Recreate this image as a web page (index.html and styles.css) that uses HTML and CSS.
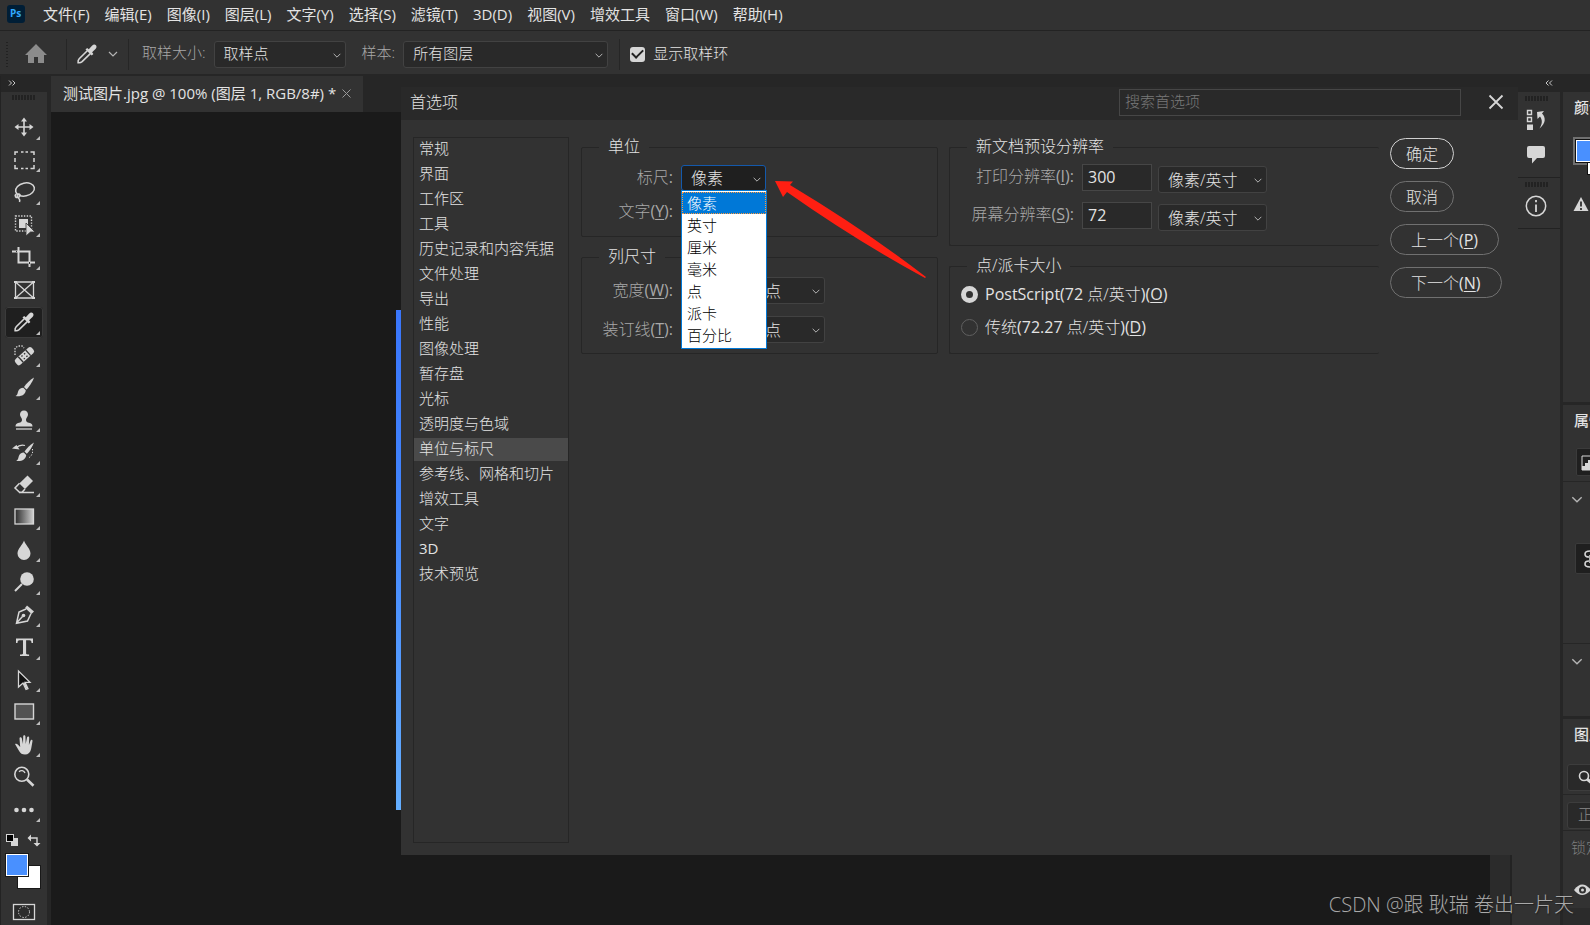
FILE: index.html
```html
<!DOCTYPE html>
<html lang="zh-CN">
<head>
<meta charset="utf-8">
<title>首选项</title>
<link rel="stylesheet" href="styles.css">
</head>
<body>
<svg class="defs" aria-hidden="true">
  <symbol id="chev" viewBox="0 0 10 6"><path d="M1 1l4 4 4-4" fill="none" stroke="#b4b4b4" stroke-width="1.2"/></symbol>
  <symbol id="dropper" viewBox="0 0 24 24"><path d="M12.300 8.700L4.200 16.800c-.9.900-1.300 2.300-1.100 3.900 1.700.3 3-.2 4-1.100l8.200-8" fill="none" stroke="#d6d6d6" stroke-width="1.600"/><path d="M10.500 7.500l1.600-1.600 1.700 1.300 3.200-3.500c1.300-1.400 3-1.400 3.900-.5s.9 2.500-.4 3.800l-3.400 3.200 1.300 1.700-1.700 1.700z" fill="#d6d6d6"/></symbol>
</svg>
<div class="app">
  <nav class="menubar" aria-label="主菜单">
    <svg class="logo" viewBox="0 0 18 18"><rect width="18" height="18" rx="3" fill="#001e36"/><text x="3" y="12" class="logo-text">Ps</text></svg>
    <button>文件(F)</button><button>编辑(E)</button><button>图像(I)</button><button>图层(L)</button><button>文字(Y)</button><button>选择(S)</button><button>滤镜(T)</button><button>3D(D)</button><button>视图(V)</button><button>增效工具</button><button>窗口(W)</button><button>帮助(H)</button>
  </nav>

  <div class="options">
    <span class="grip-v"></span>
    <button class="home" aria-label="主页"><svg width="22" height="20" viewBox="0 0 22 20"><path d="M11 0L0 11h3v8h6v-6h4v6h6v-8h3z" fill="#8c8c8c"/></svg></button>
    <span class="vline"></span>
    <button class="current-tool" aria-label="吸管工具"><svg width="24" height="24"><use href="#dropper"/></svg><svg width="10" height="6"><use href="#chev"/></svg></button>
    <span class="vline"></span>
    <label class="dim sample-size" for="ss">取样大小:</label>
    <span class="select w-size"><select id="ss"><option>取样点</option></select><svg><use href="#chev"/></svg></span>
    <label class="dim sample" for="sl">样本:</label>
    <span class="select w-layer"><select id="sl"><option>所有图层</option></select><svg><use href="#chev"/></svg></span>
    <span class="vline"></span>
    <label class="ring"><input type="checkbox" checked><span>显示取样环</span></label>
  </div>

  <div class="workspace">
    <aside class="toolbar">
      <div class="collapse"><svg width="8" height="6" viewBox="0 0 8 6"><path d="M1 .5L3.500 3 1 5.500M4.500 .5L7 3 4.500 5.500" fill="none" stroke="#c8c8c8"/></svg></div>
      <div class="grip-row"><span class="grip"></span></div>
      <div class="tools">
        <button aria-label="移动"><svg viewBox="0 0 24 24"><path d="M12 4v16M4 12h16" stroke="#d6d6d6" stroke-width="1.600"/><path d="M12 2.500l3 4H9zM12 21.500l3-4H9zM2.500 12l4-3v6zM21.500 12l-4-3v6z" fill="#d6d6d6"/></svg></button>
        <button aria-label="矩形选框"><svg viewBox="0 0 24 24"><path d="M3 7V4h3M9 4h2.500M13.500 4H16M18.500 4H22v3M22 10v4M22 17v3.500h-3.500M16 20.500h-2.500M11.500 20.500H9M6 20.500H3V17M3 14v-4" fill="none" stroke="#d6d6d6" stroke-width="1.500"/></svg></button>
        <button aria-label="套索"><svg viewBox="0 0 24 24"><g fill="none" stroke="#d6d6d6" stroke-width="1.500"><ellipse cx="13" cy="9.500" rx="9.500" ry="6.500" transform="rotate(-12 13 9.500)"/><path d="M4 14c-2 2 0 4 2 3.500s3-3 1-3.500-2.500 2-1 3.500 2.500 2 1.500 4.500"/></g></svg></button>
        <button aria-label="对象选择"><svg viewBox="0 0 24 24"><rect x="3.500" y="3" width="16" height="15" fill="none" stroke="#d6d6d6" stroke-width="1.400" stroke-dasharray="1.400 1.400"/><path d="M7 6h9v9H7z" fill="#d6d6d6"/><path d="M14 10l9 9h-4.500L14 23z" fill="#d6d6d6" stroke="#323232" stroke-width=".8"/></svg></button>
        <button aria-label="裁剪"><svg viewBox="0 0 24 24"><path d="M0 6.500h17.500V22M6.500 2v15.500H23" fill="none" stroke="#d6d6d6" stroke-width="2"/><path d="M4 6.500h1M17.500 19v-2" stroke="#323232"/></svg></button>
        <button class="plain" aria-label="图框"><svg viewBox="0 0 24 24"><path d="M3.500 4h18v16h-18zM3.500 4l18 16M21.500 4l-18 16" fill="none" stroke="#d6d6d6" stroke-width="1.300"/><path d="M2 3h3v2H2zM20 3h3v2h-3zM2 19h3v2H2zM20 19h3v2h-3z" fill="#d6d6d6"/></svg></button>
        <button class="active" aria-label="吸管"><svg><use href="#dropper"/></svg></button>
        <button aria-label="修复画笔"><svg viewBox="0 0 24 24"><path d="M3 12V5l3-2h4l2 2" fill="none" stroke="#d6d6d6" stroke-width="1.300" stroke-dasharray="1.400 1.400"/><g transform="rotate(-42 13 13)"><rect x="1.500" y="9" width="22" height="7.500" rx="2.500" fill="#d6d6d6"/><path d="M7.500 9v7.500M17.500 9v7.500M10 11h1.500M13.500 11H15M10 14.500h1.500M13.500 14.500H15" stroke="#323232" stroke-width="1.300"/></g></svg></button>
        <button aria-label="画笔"><svg viewBox="0 0 24 24"><path d="M22 2.500c-4 2.500-8 6.500-10 9.500l2.500 2.500C17 12 20.500 7 22 2.500z" fill="#d6d6d6"/><path d="M11.300 12.700l2.500 2.500c-.2 4.500-5 6.800-10.300 5.800 2-.8 2-2.400 2.500-4.300.7-2.600 3-4 5.300-4z" fill="#d6d6d6"/></svg></button>
        <button aria-label="仿制图章"><svg viewBox="0 0 24 24"><path d="M12 2.500a4.200 4.200 0 0 1 4 4.200c0 2-2 3-2 5 0 2 1 2.600 3 3 2.500.4 3.500 1.500 3.500 3.800h-17c0-2.300 1-3.400 3.500-3.800 2-.4 3-1 3-3 0-2-2-3-2-5a4.200 4.200 0 0 1 4-4.200z" fill="#d6d6d6"/><path d="M4 21h16" stroke="#d6d6d6" stroke-width="1.300"/></svg></button>
        <button aria-label="历史记录画笔"><svg viewBox="0 0 24 24"><path d="M22 2.500c-4 2.500-7.500 6-9.500 9l2.300 2.300C17 11.500 20.500 7 22 2.500z" fill="#d6d6d6"/><path d="M11.800 12.500l2.400 2.400c-.2 4.400-4.900 6.800-10 5.900 2-.8 2-2.400 2.500-4.300.7-2.600 2.800-4 5.100-4z" fill="#d6d6d6"/><path d="M4 8c3-3 6-3.500 9-2.500" fill="none" stroke="#d6d6d6" stroke-width="1.300"/><path d="M0 8.500L4.500 5l3 4.500z" fill="#d6d6d6"/><path d="M20.500 9v4l-1.500 3-3 2.500" fill="none" stroke="#d6d6d6" stroke-dasharray="1.300 1.500"/></svg></button>
        <button aria-label="橡皮擦"><svg viewBox="0 0 24 24"><path d="M15.500 2.500l5.500 5.500-8 8-5.700-5.500z" fill="#d6d6d6"/><path d="M7.500 10.300L3 15l4.500 4.300H10l3-3.300M7 19.500h15" fill="none" stroke="#d6d6d6" stroke-width="1.500"/></svg></button>
        <button aria-label="渐变"><svg viewBox="0 0 24 24"><linearGradient id="gr"><stop stop-color="#2a2a2a"/><stop offset="1" stop-color="#cfcfcf"/></linearGradient><rect x="3" y="4" width="18.500" height="15" fill="url(#gr)" stroke="#d6d6d6" stroke-width="1.300"/></svg></button>
        <button aria-label="模糊"><svg viewBox="0 0 24 24"><path d="M12 2.500c1 4 6.500 8 6.500 13a6.500 6.500 0 0 1-13 0c0-5 5.500-9 6.500-13z" fill="#d6d6d6"/></svg></button>
        <button aria-label="减淡"><svg viewBox="0 0 24 24"><circle cx="15" cy="9" r="6.800" fill="#d6d6d6"/><path d="M10 14l-7 7" stroke="#d6d6d6" stroke-width="2"/></svg></button>
        <button aria-label="钢笔"><svg viewBox="0 0 24 24"><path d="M15 2.500L22 8.500l-2.500 2.500L13 5z" fill="#d6d6d6"/><path d="M14 6L7 9 4.500 20.200 15.500 18 19 10.500M4.500 20l6-6.500" fill="none" stroke="#d6d6d6" stroke-width="1.500"/><circle cx="11.500" cy="12.500" r="1.800" fill="#d6d6d6"/></svg></button>
        <button aria-label="横排文字"><svg viewBox="0 0 24 24"><path d="M4 3.500h17V8h-1.500c0-2-.5-2.800-2-2.800h-3.400v13c0 1 .8 1.300 3 1.300V21H8v-1.500c2.200 0 3-.3 3-1.300v-13H7.500C6 5.200 5.500 6 5.500 8H4z" fill="#d6d6d6"/></svg></button>
        <button aria-label="路径选择"><svg viewBox="0 0 24 24"><path d="M6.500 3v16l4.500-4 3 6.500 2-.9-3-6.200h5z" fill="#111" stroke="#d6d6d6" stroke-width="1.300"/><path d="M11.500 15.500l2.500 5.500 1.600-.7-2.600-5.500z" fill="#d6d6d6"/></svg></button>
        <button aria-label="矩形"><svg viewBox="0 0 24 24"><rect x="3" y="4" width="18.500" height="15" fill="#535353" stroke="#d6d6d6" stroke-width="1.400"/></svg></button>
        <button aria-label="抓手"><svg viewBox="0 0 24 24"><path d="M3 11c1-.7 2.200-.2 3 .8L8.200 14 7.500 5.500c0-1.600 2-1.700 2.300-.2L11 11l.2-7.700c0-1.500 2.100-1.500 2.200 0L13.700 11l1.400-6.700c.3-1.400 2.200-1.100 2.100.4L16.900 12l1.700-4.600c.5-1.200 2.100-.8 1.900.6-.5 3-.8 5.300-1.300 7.500-.8 4-3 6-6.200 6-2.800 0-4.600-1-5.900-3.500z" fill="#d6d6d6"/></svg></button>
        <button class="plain" aria-label="缩放"><svg viewBox="0 0 24 24"><circle cx="9.800" cy="9.300" r="7" fill="none" stroke="#d6d6d6" stroke-width="1.600"/><path d="M7 6.700c2-1.800 5-1.200 6 1.300" fill="none" stroke="#d6d6d6" stroke-width="1.300"/><path d="M15 14.500l6.500 6.200" stroke="#d6d6d6" stroke-width="2.600"/></svg></button>
        <button aria-label="编辑工具栏"><svg viewBox="0 0 24 24"><g fill="#d6d6d6"><circle cx="4.500" cy="12" r="2.300"/><circle cx="12" cy="12" r="2.300"/><circle cx="19.500" cy="12" r="2.300"/></g></svg></button>
      </div>
      <div class="swatches">
        <svg width="40" height="98" viewBox="0 0 40 98">
          <path d="M6 11h7v8H6z" fill="#d6d6d6"/><rect x="1.500" y="7.500" width="7" height="7" fill="#000" stroke="#d6d6d6"/>
          <path d="M25 11h7v6" fill="none" stroke="#d6d6d6" stroke-width="1.400"/><path d="M26 7.500v7L22.500 11zM28.500 16h7L32 19.500z" fill="#d6d6d6"/>
          <rect x="12.500" y="38.500" width="23" height="23" fill="#fff" stroke="#191919"/>
          <rect x=".5" y="26.500" width="23" height="23" fill="#4990ff" stroke="#191919"/><rect x="1.500" y="27.500" width="21" height="21" fill="none" stroke="#fff"/>
          <rect x="8.500" y="77.500" width="21" height="15" fill="#2b2b2b" stroke="#d6d6d6" stroke-width="1.300"/><circle cx="19" cy="85" r="5.500" fill="none" stroke="#d6d6d6" stroke-dasharray="1.400 1.500"/>
        </svg>
      </div>
    </aside>

    <main class="document">
      <div class="tabs"><div class="tab">测试图片.jpg @ 100% (图层 1, RGB/8#) *<button aria-label="关闭"><svg width="9" height="9" viewBox="0 0 9 9"><path d="M.5 .5l8 8M8.500 .5l-8 8" stroke="#999"/></svg></button></div></div>
      <div class="canvas"><div class="picture"></div><div class="scroll"></div></div>
    </main>

    <aside class="side">
      <div class="side-head"><svg width="8" height="6" viewBox="0 0 8 6"><path d="M3.500 .5L1 3l2.500 2.500M7 .5L4.500 3 7 5.500" fill="none" stroke="#c8c8c8"/></svg></div>
      <div class="side-body">
        <div class="dock">
          <div class="dock-group">
            <span class="grip"></span>
            <button aria-label="历史记录"><svg width="22" height="22" viewBox="0 0 22 22"><path d="M2.500 1.500h4v4h-4zM2.500 8.500h4v4h-4z" fill="none" stroke="#d6d6d6" stroke-width="1.400"/><path d="M2 15.500h6V21H2z" fill="#d6d6d6"/><path d="M12 3l7-1-2 2.500c4 4 4 10-2.500 15 3-5 3-8.500.5-12L12.500 10z" fill="#d6d6d6"/></svg></button>
            <button aria-label="注释"><svg width="22" height="22" viewBox="0 0 22 22"><path d="M4 2h14q2 0 2 2v8q0 2-2 2h-6l-5 5.500V14H4q-2 0-2-2V4q0-2 2-2z" fill="#d6d6d6"/></svg></button>
          </div>
          <div class="dock-group">
            <span class="grip"></span>
            <button aria-label="信息"><svg width="22" height="22" viewBox="0 0 22 22"><circle cx="11" cy="11" r="9.700" fill="none" stroke="#d6d6d6" stroke-width="1.500"/><path d="M11 9.500V17M11 5v2.200" stroke="#d6d6d6" stroke-width="1.800"/></svg></button>
          </div>
        </div>
        <div class="panels">
          <section class="panel p-color">
            <h2>颜色</h2>
            <svg class="color-chip" width="30" height="40" viewBox="0 0 30 40"><path d="M0 0h30v28H0z" fill="#707070"/><path d="M14 25h16v13H14z" fill="#111"/><path d="M15 26h15v11H15z" fill="#fff"/><path d="M2 2h28v24H2z" fill="#111"/><path d="M3 3h27v22H3z" fill="#fff"/><path d="M4 4h26v20H4z" fill="#4990ff"/></svg>
            <svg class="warn" width="16" height="16" viewBox="0 0 16 16"><path d="M8 1l7.500 14H.5z" fill="#d6d6d6"/><path d="M8 5.500v5M8 12v2" stroke="#323232" stroke-width="1.800"/></svg>
          </section>
          <section class="panel p-props">
            <h2>属性</h2>
            <div class="chip"><svg width="16" height="16" viewBox="0 0 16 16"><path d="M1 1h15v14H1z" fill="#1f1f1f" stroke="#d6d6d6"/><path d="M1 15v-4h3V8h3V5h3V3h6v12z" fill="#d6d6d6"/></svg></div>
            <div class="fold first"><svg width="12" height="7"><use href="#chev"/></svg></div>
            <div class="chip link"><svg width="16" height="20" viewBox="0 0 16 20"><path d="M5 8Q1 8 1 5t5-3 5 3-2 3M5 12q-4 0-4 3t5 3 5-3-2-3M6 6v8" fill="none" stroke="#d6d6d6" stroke-width="1.600"/></svg></div>
            <div class="fold second"><svg width="12" height="7"><use href="#chev"/></svg></div>
          </section>
          <section class="panel p-layers">
            <h2>图层</h2>
            <div class="field"><svg width="16" height="16" viewBox="0 0 16 16"><circle cx="6" cy="6" r="4.500" fill="none" stroke="#d6d6d6" stroke-width="1.600"/><path d="M9 9l6 5" stroke="#d6d6d6" stroke-width="3"/></svg></div>
            <div class="row"><div class="field">正常</div></div>
            <div class="lock">锁定:</div>
            <svg class="eye" width="18" height="12" viewBox="0 0 18 12"><path d="M0 6q8-11 17 0-9 10-17 0z" fill="#d6d6d6"/><circle cx="8.500" cy="6" r="3.500" fill="#323232"/><circle cx="8.500" cy="6" r="1.500" fill="#d6d6d6"/></svg>
            <div class="panel-foot"></div>
          </section>
        </div>
      </div>
    </aside>
  </div>

  <div class="dialog" role="dialog" aria-labelledby="dlg-title">
    <header class="dlg-head">
      <h1 id="dlg-title">首选项</h1>
      <input type="text" class="search" placeholder="搜索首选项" aria-label="搜索首选项">
      <button class="close" aria-label="关闭"><svg width="16" height="16" viewBox="0 0 16 16"><path d="M1.500 1.500l13 13M14.500 1.500l-13 13" stroke="#d6d6d6" stroke-width="1.800"/></svg></button>
    </header>
    <div class="dlg-body">
      <nav class="cats" aria-label="类别">
        <button>常规</button><button>界面</button><button>工作区</button><button>工具</button><button>历史记录和内容凭据</button><button>文件处理</button><button>导出</button><button>性能</button><button>图像处理</button><button>暂存盘</button><button>光标</button><button>透明度与色域</button><button class="on">单位与标尺</button><button>参考线、网格和切片</button><button>增效工具</button><button>文字</button><button class="key">3D</button><button>技术预览</button>
      </nav>
      <div class="col col-a">
        <fieldset class="units">
          <legend>单位</legend>
          <div class="line"><label class="dim" for="ruler">标尺<span class="key">:</span></label>
            <span class="select focus"><select id="ruler"><option>像素</option></select><svg><use href="#chev"/></svg>
              <ul class="popup" role="listbox" aria-label="标尺"><li class="hot" role="option" aria-selected="true">像素</li><li role="option">英寸</li><li role="option">厘米</li><li role="option">毫米</li><li role="option">点</li><li role="option">派卡</li><li role="option">百分比</li></ul>
            </span></div>
          <div class="line"><label class="dim" for="type">文字<span class="key">(<u>Y</u>):</span></label><span class="select w-type"><select id="type"><option>点</option></select></span></div>
        </fieldset>
        <fieldset class="columns">
          <legend>列尺寸</legend>
          <div class="line"><label class="dim" for="cw">宽度<span class="key">(<u>W</u>):</span></label><input id="cw" type="text" value="180"><span class="select w-pt"><select aria-label="宽度单位"><option>点</option></select><svg><use href="#chev"/></svg></span></div>
          <div class="line"><label class="dim" for="gut">装订线<span class="key">(<u>T</u>):</span></label><input id="gut" type="text" value="12"><span class="select w-pt"><select aria-label="装订线单位"><option>点</option></select><svg><use href="#chev"/></svg></span></div>
        </fieldset>
      </div>
      <div class="col col-b">
        <fieldset class="res">
          <legend>新文档预设分辨率</legend>
          <div class="line"><label class="dim" for="pr">打印分辨率<span class="key">(<u>I</u>):</span></label><input id="pr" type="text" value="300"><span class="select w-res"><select aria-label="打印分辨率单位"><option>像素/英寸</option></select><svg><use href="#chev"/></svg></span></div>
          <div class="line"><label class="dim" for="sr">屏幕分辨率<span class="key">(<u>S</u>):</span></label><input id="sr" type="text" value="72"><span class="select w-res"><select aria-label="屏幕分辨率单位"><option>像素/英寸</option></select><svg><use href="#chev"/></svg></span></div>
        </fieldset>
        <fieldset class="pica">
          <legend>点/派卡大小</legend>
          <label class="radio"><input type="radio" name="pica" checked><span><span class="key">PostScript(72</span> 点/英寸<span class="key">)(<u>O</u>)</span></span></label>
          <label class="radio"><input type="radio" name="pica"><span>传统<span class="key">(72.27</span> 点/英寸<span class="key">)(<u>D</u>)</span></span></label>
        </fieldset>
      </div>
      <div class="actions">
        <button class="primary">确定</button><button>取消</button><button>上一个<span class="key">(<u>P</u>)</span></button><button>下一个<span class="key">(<u>N</u>)</span></button>
      </div>
    </div>
    <svg class="arrow" width="154" height="100" viewBox="0 0 154 100"><path d="M0 1L18 1.500 15 5Q90 50 151 97L150 98Q80 60 12 12L8 17Z" fill="#ff1f12"/></svg>
  </div>
  <div class="watermark">CSDN @跟 耿瑞 卷出一片天</div>
</div>
</body>
</html>
```
FILE: styles.css
```css
* { box-sizing: border-box; }
body { margin: 0; background: #1a1a1a; color: #e3e3e3; font: 15px/20px "Open Sans", "Noto Sans CJK SC", sans-serif; overflow: hidden; }
button { background: none; border: 0; padding: 0; margin: 0; color: inherit; font: inherit; white-space: nowrap; }
input, select { font: inherit; color: inherit; margin: 0; }
svg { display: block; flex: none; }
h1, h2 { margin: 0; font-size: 15px; font-weight: 400; }
u { text-underline-offset: 2px; }
.defs { position: absolute; width: 0; height: 0; }
.dim { color: #a8a8a8; }
.app { position: relative; display: flex; flex-direction: column; height: 100vh; overflow: hidden; }

/* Menu bar */
.menubar { display: flex; align-items: center; gap: 15px; height: 31px; padding: 0 7px 2px; background: #323232; border-bottom: 1px solid #232323; }
.logo { width: 18px; height: 18px; margin-right: 3px; }
.logo-text { fill: #31a8ff; font-size: 10px; font-weight: 700; font-family: "Open Sans", sans-serif; }

/* Options bar */
.options { display: flex; align-items: center; height: 45px; padding: 3px 0 0 6px; background: #323232; border-bottom: 2px solid #262626; font-weight: 300; }
.grip-v { width: 2px; height: 25px; background: repeating-linear-gradient(#222 0 1px, #323232 1px 3px); }
.home { margin: 0 19px 0 17px; }
.vline { width: 1px; height: 31px; background: #262626; }
.current-tool { display: flex; align-items: center; gap: 9px; padding: 0 10px 0 8px; }
.sample-size { margin: 0 8px 0 13px; padding-bottom: 4px; }
.sample { margin: 0 8px 0 16px; padding-bottom: 4px; }
.select { position: relative; display: block; height: 27px; }
.select select { appearance: none; width: 100%; height: 100%; padding: 0 9px; background: #292929; border: 1px solid #424242; border-radius: 3px; font-weight: 300; }
.options select { padding-bottom: 2px; }
.select > svg { position: absolute; right: 4px; top: 12px; width: 10px; height: 5px; pointer-events: none; }
.w-size { width: 132px; }
.w-layer { width: 205px; margin-right: 11px; }
.ring { display: flex; align-items: center; gap: 8px; margin-left: 10px; }
.ring span { padding-bottom: 3px; }
.ring input { appearance: none; width: 15px; height: 15px; border-radius: 3px; background: #d6d6d6; display: grid; place-items: center; }
.ring input::before { content: ""; width: 9px; height: 5px; margin-top: -3px; border: solid #222; border-width: 0 0 2px 2px; transform: rotate(-45deg); }

/* Workspace */
.workspace { flex: 1; min-height: 0; display: flex; }
.toolbar { width: 51px; flex: none; display: flex; flex-direction: column; background: #323232; border-left: 1px solid #232323; border-right: 4px solid #262626; }
.collapse { height: 16px; padding: 4px 7px; background: #262626; }
.grip { display: block; width: 24px; height: 5px; background: repeating-linear-gradient(90deg, #222 0 2px, #323232 2px 3px); }
.grip-row { height: 20px; padding: 3px 11px; }
.tools { flex: 1; display: flex; flex-direction: column; padding: 0 4px; }
.tools button { position: relative; flex: 1; min-height: 0; width: 38px; margin-bottom: 2px; display: grid; place-items: center; }
.tools svg { width: 24px; height: 24px; }
.tools button::after { content: ""; position: absolute; right: 3px; bottom: 3px; border: 2px solid; border-color: transparent #bdbdbd #bdbdbd transparent; }
.tools .plain::after { display: none; }
.tools .active { background: #1f1f1f; outline: 1px solid #3b3b3b; outline-offset: -1px; border-radius: 3px; }
.swatches { height: 98px; padding-left: 4px; }

.document { flex: 1; min-width: 0; display: flex; flex-direction: column; }
.tabs { height: 36px; background: #262626; display: flex; }
.tab { display: flex; align-items: center; gap: 6px; padding: 0 12px 2px; background: #323232; }
.canvas { flex: 1; display: flex; justify-content: space-between; background: #1a1a1a; }
.picture { width: 1000px; height: 500px; margin: 198px 0 0 345px; background: linear-gradient(#3a76fb, #4285fd 40%, #64aeff); }
.scroll { width: 22px; background: #2b2b2b; border-right: 2px solid #232323; }

.side { width: 78px; flex: none; display: flex; flex-direction: column; background: #323232; }
.side-head { height: 16px; padding: 4px 33px; background: #262626; }
.side-body { flex: 1; min-height: 0; display: flex; }
.dock { width: 51px; flex: none; border-right: 3px solid #262626; }
.dock-group { display: flex; flex-direction: column; align-items: flex-start; gap: 13px; padding: 4px 0 11px 13px; border-bottom: 1px solid #222; }
.dock-group .grip { margin-bottom: -5px; }
.panels { flex: 1; min-width: 0; overflow: hidden; display: flex; flex-direction: column; font-weight: 300; }
.panel { border-bottom: 3px solid #262626; white-space: nowrap; overflow: hidden; }
.panel h2 { padding: 5px 11px; height: 45px; font-weight: 500; }
.p-color { height: 313px; }
.color-chip { margin-left: 10px; }
.warn { margin: 19px 0 0 10px; }
.p-props { height: 314px; }
.p-props h2 { height: 43px; }
.chip { width: 30px; height: 28px; margin-left: 13px; padding: 6px 4px; background: #1f1f1f; border: 1px solid #3b3b3b; border-radius: 2px; }
.fold { margin-top: 5px; border-top: 1px solid #262626; padding: 14px 8px; }
.link { height: 31px; margin: 26px 0 0 12px; padding: 5px 8px; }
.second { margin-top: 69px; }
.p-layers { flex: 1; border: 0; }
.field { width: 60px; height: 27px; margin-left: 4px; padding: 1px 10px; background: #292929; border: 1px solid #3d3d3d; border-radius: 3px; color: #8a8a8a; }
.field svg { margin-top: 4px; }
.row { border: solid #262626; border-width: 1px 0; margin-top: 3px; padding: 7px 0 1px; }
.lock { padding: 6px 8px 0; color: #7d7d7d; }
.eye { margin: 27px 0 0 11px; }
.panel-foot { height: 30px; margin-top: 12px; background: #2b2b2b; }

/* Preferences dialog */
.dialog { position: absolute; left: 401px; right: 72px; top: 87px; bottom: 70px; display: flex; flex-direction: column; background: #323232; font-size: 16px; font-weight: 300; }
.dialog .key, .line input { font-weight: 400; }
.dlg-head { display: flex; align-items: center; height: 33px; padding: 0 14px 3px 9px; background: #292929; }
.dlg-head h1 { flex: 1; font-size: 16px; font-weight: 300; }
.search { width: 342px; height: 27px; padding: 0 5px 2px; margin-right: 27px; font-size: 15px; background: #292929; border: 1px solid #464646; }
.search::placeholder { color: #7a7a7a; }
.dlg-body { flex: 1; display: flex; align-items: flex-start; padding: 17px 14px 12px 12px; }
.cats { align-self: stretch; width: 156px; flex: none; display: flex; flex-direction: column; gap: 2px; border: 1px solid #262626; font-size: 15px; }
.cats button { height: 23px; padding: 0 5px 3px; text-align: left; line-height: 20px; }
.cats .on { background: #4a4a4a; }
.col { display: flex; flex-direction: column; }
.col-a { width: 357px; flex: none; margin-left: 12px; }
.col-b { flex: 1; margin: 0 11px; }
fieldset { margin: 0; padding: 0; min-width: 0; border: 1px solid #262626; border-radius: 2px; }
legend { margin-left: 17px; padding: 0 9px; height: 20px; line-height: 18px; }
.line { display: flex; align-items: center; }
.line .dim { flex: none; text-align: right; margin-right: 8px; padding-bottom: 2px; white-space: nowrap; }
.line input { height: 27px; background: #292929; border: 1px solid #464646; padding: 0 5px; width: 70px; }
.col-a .dim { width: 91px; }
.focus { width: 85px; height: 26px; }
.focus select { background: #1f1f1f; border-color: #1459ab; }
.units { height: 100px; padding-top: 8px; }
.units .line + .line { margin-top: 7px; }
.w-type { width: 85px; }
.columns { height: 107px; margin-top: 10px; padding-top: 8px; }
.columns .line { padding-top: 2px; }
.columns .line + .line { margin-top: 10px; }
.w-pt { width: 70px; margin-left: 4px; }
.col-b fieldset { border-right: 0; }
.res { height: 109px; padding-top: 4px; }
.res .dim { width: 124px; }
.res .line + .line { margin-top: 6px; }
.w-res { width: 109px; margin: 5px 0 0 6px; }
.pica { height: 98px; margin-top: 10px; }
.radio { display: flex; align-items: center; gap: 7px; height: 20px; margin: 8px 0 13px 11px; }
.radio > span { padding-bottom: 1px; }
.radio input { appearance: none; width: 17px; height: 17px; border: 1px solid #606060; border-radius: 50%; }
.radio input:checked { border: 5px solid #d6d6d6; }
.actions { width: 114px; flex: none; display: flex; flex-direction: column; align-items: flex-start; gap: 12px; padding-top: 1px; }
.actions button { height: 31px; min-width: 64px; padding: 0 20px; border: 1px solid #707070; border-radius: 16px; }
.actions button:first-child, .actions button:nth-child(2) { padding: 0 15px; }
.actions .primary { border-color: #d0d0d0; }

/* Open list of the ruler select */
.popup { position: absolute; left: 0; top: 25px; z-index: 2; width: 86px; height: 159px; margin: 0; padding: 1px 0; list-style: none; background: #fff; border: 1px solid #0078d7; color: #000; font-size: 15px; line-height: 22px; }
.popup li { padding: 0 5px; height: 22px; }
.popup .hot { background: #0078d7; color: #fff; outline: 1px dotted #ff9a3c; outline-offset: -1px; }
.arrow { position: absolute; left: 374px; top: 93px; }
.watermark { position: absolute; right: 16px; bottom: 8px; color: #a9a9a9; font-size: 20px; line-height: 24px; font-weight: 300; text-shadow: 1px 1px 1px #222; }
```
